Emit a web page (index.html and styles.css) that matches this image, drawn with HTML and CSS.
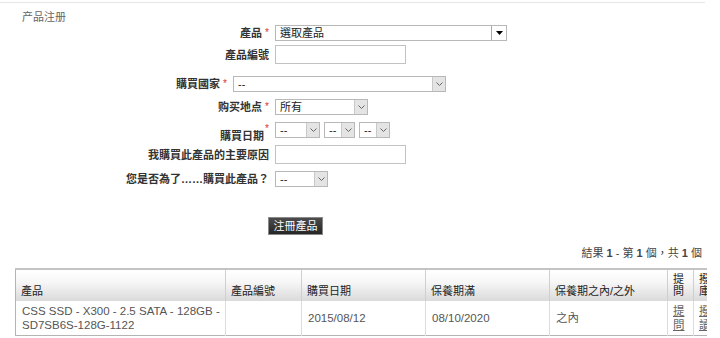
FILE: index.html
```html
<!DOCTYPE html>
<html lang="zh-Hant">
<head>
    <meta charset="UTF-8">
    <title>产品注册</title>
    <link rel="stylesheet" href="styles.css">
</head>
<body>
    <div class="page">
        <div class="topline"></div>
        <h2 class="section-title">产品注册</h2>

        <div class="form">
            <div class="form-row form-row--tight">
                <label class="form-label">產品<span class="req">*</span></label>
                <div class="select select--product">
                    <span class="select-value">選取產品</span>
                    <span class="select-btn select-btn--dark">
                        <svg width="7" height="4" viewBox="0 0 7 4"><polygon points="0,0 7,0 3.5,4" fill="#000"/></svg>
                    </span>
                </div>
            </div>
            <div class="form-row form-row--loose">
                <label class="form-label">產品編號</label>
                <input class="text-input" type="text">
            </div>
            <div class="form-row">
                <label class="form-label form-label--short">購買國家<span class="req">*</span></label>
                <div class="select select--country">
                    <span class="select-value">--</span>
                    <span class="select-btn"><svg width="7" height="4" viewBox="0 0 7 4"><polyline points="0.5,0.5 3.5,3.5 6.5,0.5" fill="none" stroke="#666"/></svg></span>
                </div>
            </div>
            <div class="form-row">
                <label class="form-label">购买地点<span class="req">*</span></label>
                <div class="select select--place">
                    <span class="select-value">所有</span>
                    <span class="select-btn"><svg width="7" height="4" viewBox="0 0 7 4"><polyline points="0.5,0.5 3.5,3.5 6.5,0.5" fill="none" stroke="#666"/></svg></span>
                </div>
            </div>
            <div class="form-row">
                <label class="form-label form-label--low">購買日期<span class="req req--raised">*</span></label>
                <div class="date-selects">
                    <div class="select select--day">
                        <span class="select-value">--</span>
                        <span class="select-btn"><svg width="7" height="4" viewBox="0 0 7 4"><polyline points="0.5,0.5 3.5,3.5 6.5,0.5" fill="none" stroke="#666"/></svg></span>
                    </div>
                    <div class="select select--month">
                        <span class="select-value">--</span>
                        <span class="select-btn"><svg width="7" height="4" viewBox="0 0 7 4"><polyline points="0.5,0.5 3.5,3.5 6.5,0.5" fill="none" stroke="#666"/></svg></span>
                    </div>
                    <div class="select select--month">
                        <span class="select-value">--</span>
                        <span class="select-btn"><svg width="7" height="4" viewBox="0 0 7 4"><polyline points="0.5,0.5 3.5,3.5 6.5,0.5" fill="none" stroke="#666"/></svg></span>
                    </div>
                </div>
            </div>
            <div class="form-row">
                <label class="form-label">我購買此產品的主要原因</label>
                <input class="text-input" type="text">
            </div>
            <div class="form-row">
                <label class="form-label">您是否為了……購買此產品？</label>
                <div class="select select--reason">
                    <span class="select-value">--</span>
                    <span class="select-btn"><svg width="7" height="4" viewBox="0 0 7 4"><polyline points="0.5,0.5 3.5,3.5 6.5,0.5" fill="none" stroke="#666"/></svg></span>
                </div>
            </div>
        </div>

        <div class="actions">
            <button class="btn" type="button">注冊產品</button>
        </div>

        <div class="results">結果 <b>1</b> - 第 <b>1</b> 個，共 <b>1</b> 個</div>

        <div class="table-wrap">
            <table class="reg-table">
                <colgroup>
                    <col style="width: 210px">
                    <col style="width: 76px">
                    <col style="width: 124px">
                    <col style="width: 124px">
                    <col style="width: 118px">
                    <col style="width: 26px">
                    <col style="width: 26px">
                </colgroup>
                <thead>
                    <tr>
                        <th>產品</th>
                        <th>產品編號</th>
                        <th>購買日期</th>
                        <th>保養期滿</th>
                        <th>保養期之內/之外</th>
                        <th class="narrow">提問</th>
                        <th class="narrow">撥庫</th>
                    </tr>
                </thead>
                <tbody>
                    <tr>
                        <td>CSS SSD - X300 - 2.5 SATA - 128GB - SD7SB6S-128G-1122</td>
                        <td></td>
                        <td>2015/08/12</td>
                        <td>08/10/2020</td>
                        <td>之內</td>
                        <td class="narrow"><a href="#">提問</a></td>
                        <td class="narrow"><a href="#">撥讀</a></td>
                    </tr>
                </tbody>
            </table>
        </div>
    </div>
</body>
</html>
```

FILE: styles.css
```css
* {
    box-sizing: border-box;
}
body {
    margin: 0;
    background: #fff;
    color: #333;
    font-family: "Liberation Sans", "Noto Sans CJK TC", sans-serif;
    font-size: 11px;
    overflow: hidden;
}
.page {
    padding-top: 2px;
}
.topline {
    width: 705px;
    border-top: 1px solid #e6e6e6;
}
.section-title {
    margin: 7px 0 1px;
    padding-left: 22px;
    height: 14px;
    line-height: 14px;
    font-size: 11px;
    font-weight: normal;
    color: #666;
}

/* formulario */
.form-row {
    display: flex;
    align-items: center;
    margin-bottom: 7px;
}
.form-row--tight {
    margin-bottom: 4px;
}
.form-row--loose {
    margin-bottom: 12px;
}
.form-label {
    width: 275px;
    flex-shrink: 0;
    padding-right: 6px;
    text-align: right;
    font-weight: bold;
    color: #333;
    line-height: 14px;
}
.form-label--short {
    width: 233px;
}
.form-label--low {
    align-self: flex-end;
    margin-bottom: -5px;
}
.req {
    color: #d33;
    font-size: 10px;
    font-weight: normal;
    margin-left: 3px;
    vertical-align: top;
}
.req--raised {
    position: relative;
    top: -7px;
    margin-left: 1px;
}
.select {
    display: flex;
    height: 16px;
    border: 1px solid #b8b8b8;
    background: #fff;
}
.select-value {
    flex: 1;
    padding-left: 4px;
    line-height: 14px;
    color: #222;
    white-space: nowrap;
    overflow: hidden;
}
.select-btn {
    width: 13px;
    display: flex;
    align-items: center;
    justify-content: center;
    background: #e4e4e4;
    border-left: 1px solid #c9c9c9;
}
.select-btn--dark {
    width: 15px;
    background: #fff;
    border-left: 1px solid #a8a8a8;
}
.select--product {
    width: 232px;
}
.select--country {
    width: 213px;
}
.select--place {
    width: 93px;
}
.select--day {
    width: 45px;
}
.select--month {
    width: 31px;
}
.select--reason {
    width: 53px;
}
.date-selects {
    display: flex;
    gap: 4px;
}
.text-input {
    width: 131px;
    height: 19px;
    margin: 0;
    border: 1px solid #c2c2c2;
    background: #fff;
}

/* boton */
.actions {
    padding: 23px 0 0 268px;
}
.btn {
    display: block;
    width: 55px;
    height: 18px;
    padding: 0;
    border: 1px solid #8a8a8a;
    background: linear-gradient(#4c4c4c, #262626);
    color: #fff;
    font-family: "Liberation Sans", "Noto Sans CJK TC", sans-serif;
    font-size: 11px;
    line-height: 16px;
}

.results {
    margin-top: 11px;
    padding-right: 18px;
    text-align: right;
    line-height: 14px;
    color: #444;
}

/* tabla */
.table-wrap {
    width: 692px;
    margin: 8px 0 0 15px;
    overflow: hidden;
}
.reg-table {
    width: 704px;
    table-layout: fixed;
    border-collapse: collapse;
    border: 1px solid #b4b4b4;
    border-top: 2px solid #c4c4c4;
}
.reg-table th {
    height: 32px;
    padding: 0 4px 4px 5px;
    vertical-align: bottom;
    text-align: left;
    font-weight: normal;
    color: #222;
    line-height: 12px;
    background: linear-gradient(#fff 0%, #f6f6f6 40%, #dadada 100%);
    border-right: 1px solid #cfcfcf;
}
.reg-table td {
    height: 34px;
    padding: 3px 4px 3px 6px;
    vertical-align: middle;
    color: #555;
    font-size: 11.5px;
    line-height: 14px;
    border-right: 1px solid #dcdcdc;
}
.reg-table .narrow {
    padding-left: 5px;
    padding-right: 2px;
}
.reg-table a {
    color: #666;
}
```
